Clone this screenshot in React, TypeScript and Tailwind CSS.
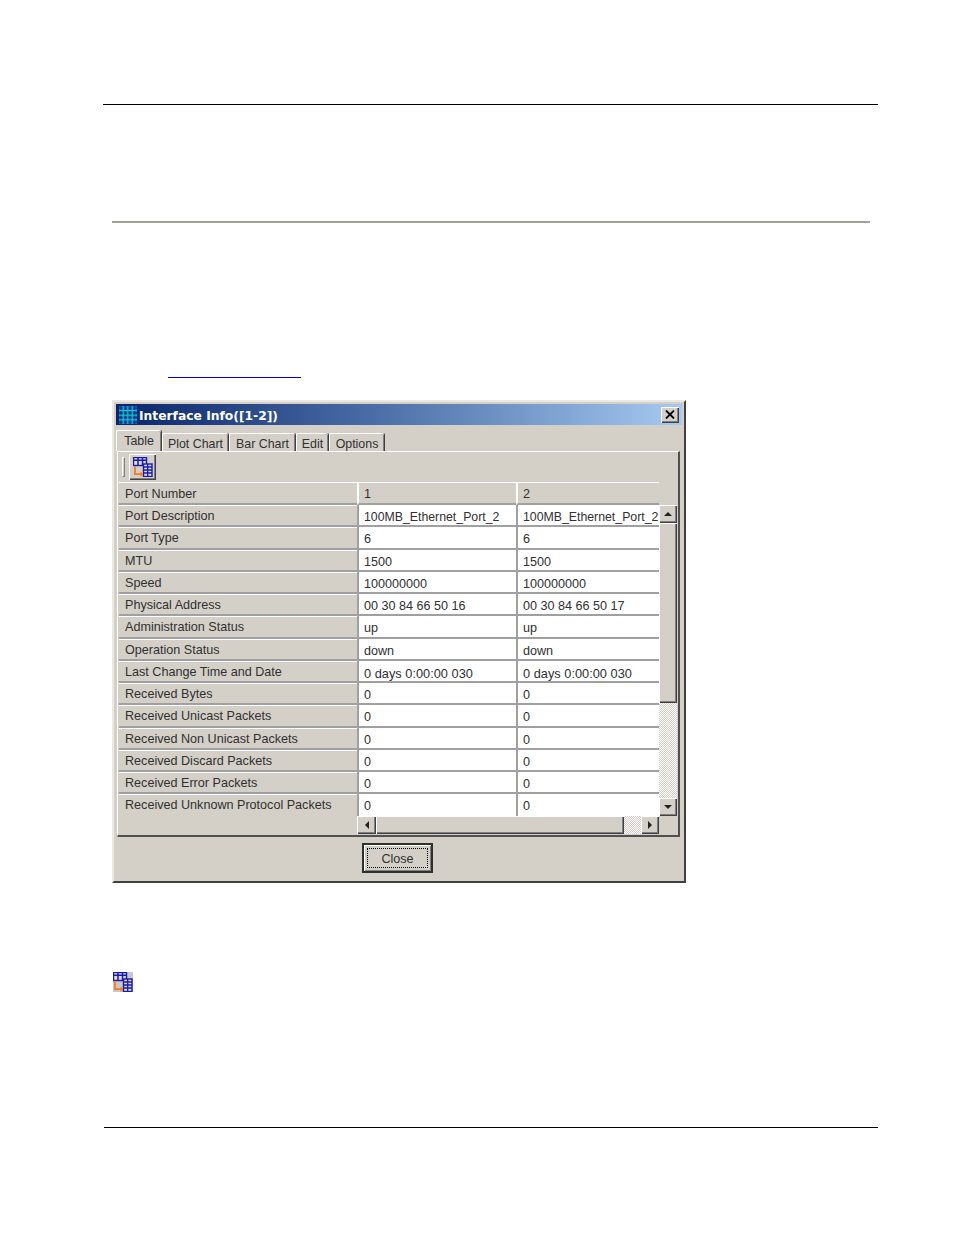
const rows: [string, string, string][] = [
  ["Port Description", "100MB_Ethernet_Port_2", "100MB_Ethernet_Port_2"],
  ["Port Type", "6", "6"],
  ["MTU", "1500", "1500"],
  ["Speed", "100000000", "100000000"],
  ["Physical Address", "00 30 84 66 50 16", "00 30 84 66 50 17"],
  ["Administration Status", "up", "up"],
  ["Operation Status", "down", "down"],
  ["Last Change Time and Date", "0 days 0:00:00 030", "0 days 0:00:00 030"],
  ["Received Bytes", "0", "0"],
  ["Received Unicast Packets", "0", "0"],
  ["Received Non Unicast Packets", "0", "0"],
  ["Received Discard Packets", "0", "0"],
  ["Received Error Packets", "0", "0"],
  ["Received Unknown Protocol Packets", "0", "0"],
];

const raised = "bg-[#d4d0c8] shadow-[inset_1px_1px_0_#ffffff,inset_-1px_-1px_0_#404040,inset_-2px_-2px_0_#808080]";
const dither = "bg-[repeating-conic-gradient(#d4d0c8_0_25%,#ffffff_0_50%)] bg-[length:2px_2px]";

function TableIcon({ size, backed }: { size: number; backed?: boolean }) {
  return (
    <svg width={size} height={size} viewBox="0 0 20 20">
      {backed && <rect x="0" y="0" width="20" height="20" fill="#c8c8c8" />}
      <rect x="0.5" y="0.5" width="13" height="8" fill="#dcdcf4" stroke="#1a1aa8" strokeWidth="1.4" />
      <path d="M0.5 3.2h13M5 0.5v8M9.5 0.5v8" stroke="#1a1aa8" strokeWidth="1.5" fill="none" />
      <rect x="10.5" y="7" width="8.5" height="12.5" fill="#dcdcf4" stroke="#1a1aa8" strokeWidth="1.4" />
      <path d="M10.5 10h8.5M10.5 13h8.5M10.5 16h8.5M14.7 7v12.5" stroke="#1a1aa8" strokeWidth="1.3" fill="none" />
      <path d="M2 9.5v7.7h6.5" stroke="#f47a20" strokeWidth="1.8" fill="none" />
      <path d="M7.5 14.5l2.6 2.7-2.6 2.7z" fill="#f47a20" />
    </svg>
  );
}

function GridIcon() {
  return (
    <svg width="20" height="20" viewBox="0 0 20 20">
      <rect x="1" y="1" width="18" height="18" fill="#1060e8" />
      <path d="M1 3h18M1 8h18M1 12.5h18M1 17h18M3 1v18M7.5 1v18M12 1v18M16.5 1v18" stroke="#063a70" strokeWidth="1.2" fill="none" />
      <path d="M1 5.5h18M1 10.2h18M1 14.8h18M5.2 1v18M9.8 1v18M14.2 1v18" stroke="#18c8b0" strokeWidth="1" fill="none" />
    </svg>
  );
}

function Arrow({ d }: { d: "up" | "down" | "left" | "right" }) {
  const points = {
    up: "4,0 0,4 8,4",
    down: "0,0 8,0 4,4",
    left: "4,0 4,8 0,4",
    right: "0,0 4,4 0,8",
  }[d];
  const horizontal = d === "left" || d === "right";
  return (
    <svg width={horizontal ? 4 : 8} height={horizontal ? 8 : 4} viewBox={horizontal ? "0 0 4 8" : "0 0 8 4"}>
      <polygon points={points} fill="#222222" />
    </svg>
  );
}

function ScrollButton({ d, className }: { d: "up" | "down" | "left" | "right"; className: string }) {
  return <div className={`${raised} ${className} flex shrink-0 items-center justify-center`}><Arrow d={d} /></div>;
}

function Tab({ label, width, active }: { label: string; width: string; active?: boolean }) {
  return (
    <div
      className={`${width} ${
        active
          ? "flex h-[21px] items-center justify-center rounded-t-[2px] border-l border-t border-white shadow-[inset_-1px_0_0_#808080,1px_0_0_#404040]"
          : "mt-[3px] flex h-[18px] items-center justify-center rounded-t-[2px] border-l border-t border-white pt-[3px] shadow-[inset_-1px_0_0_#808080,1px_0_0_#404040]"
      }`}
    >
      {label}
    </div>
  );
}

export default function App() {
  return (
    <div className="flex h-[1235px] w-[954px] flex-col bg-white font-['Liberation_Sans',Arial,sans-serif] text-[12.6px] text-[#303030]">
      <div className="ml-[103px] mt-[104px] h-px w-[775px] bg-black" />
      <div className="ml-[112px] mt-[116px] h-[2px] w-[758px] bg-[#a3a197]" />
      <div className="ml-[168px] mt-[154px] h-px w-[133px] bg-[#0000d8]" />

      <div className="ml-[112px] mt-[22px] flex h-[483px] w-[574px] flex-col border-b-2 border-l-2 border-r-2 border-t-2 border-b-[#404040] border-l-[#ece9e2] border-r-[#404040] border-t-[#ece9e2] bg-[#d4d0c8] p-[2px]">
        <div className="flex h-[21px] shrink-0 items-center bg-gradient-to-r from-[#0a246a] to-[#a6caf0] pl-[2px] pr-[3px]">
          <GridIcon />
          <span className="ml-[1px] pt-[3px] font-['DejaVu_Sans',sans-serif] text-[12.3px] font-bold text-white">Interface Info([1-2])</span>
          <div className={`${raised} ml-auto flex h-[16px] w-[18px] items-center justify-center`}>
            <svg width="10" height="9" viewBox="0 0 10 9"><path d="M1 0.5l8 8M9 0.5l-8 8" stroke="#000000" strokeWidth="1.8" /></svg>
          </div>
        </div>

        <div className="mt-[5px] flex h-[21px] shrink-0 gap-[1px] text-[12.4px]">
          <Tab label="Table" width="w-[45px]" active />
          <Tab label="Plot Chart" width="w-[66px]" />
          <Tab label="Bar Chart" width="w-[66px]" />
          <Tab label="Edit" width="w-[32px]" />
          <Tab label="Options" width="w-[55px]" />
        </div>

        <div className="ml-[1px] mr-[2px] flex h-[386px] shrink-0 flex-col border-b-2 border-l border-r-2 border-t border-b-[#505050] border-l-white border-r-[#505050] border-t-white">
          <div className="ml-[4px] mt-[2px] flex h-[25px] shrink-0 items-center">
            <div className="mr-[4px] h-[20px] w-[3px] border border-b-[#808080] border-l-white border-r-[#808080] border-t-white" />
            <div className={`${raised} flex h-[26px] w-[27px] shrink-0 items-center justify-center`}>
              <TableIcon size={20} />
            </div>
          </div>

          <div className="ml-[1px] mt-[3px] flex flex-col">
            <div className="flex h-[23px]">
              <div className="flex w-[238px] items-center border-b-2 border-t border-b-[#a0a0a0] border-t-white pl-[6px] pt-[2px]">Port Number</div>
              <div className="flex w-[159px] items-center border-b-2 border-l-2 border-t border-b-[#a0a0a0] border-l-white border-t-white pl-[5px] pt-[2px]">1</div>
              <div className="flex w-[143px] items-center border-b-2 border-l-2 border-t border-b-[#a0a0a0] border-l-white border-t-white pl-[5px] pt-[2px]">2</div>
            </div>

            <div className="flex">
              <div className="flex h-[311px] w-[540px] flex-col">
                {rows.map(([label, a, b], i) => (
                  <div key={label} className="flex h-[22.25px] shrink-0">
                    <div className={`flex w-[238px] items-center border-t border-t-white pl-[6px] pt-[2px] ${i === 13 ? "pb-[2px]" : "border-b-2 border-b-[#a0a0a0]"}`}>{label}</div>
                    <div className={`flex w-[159px] items-center border-l-2 border-l-[#a0a0a0] bg-white pl-[5px] pt-[5px] whitespace-nowrap ${i === 0 ? "text-[12.3px]" : i === 7 ? "text-[12.8px]" : ""} ${i === 13 ? "pb-[2px]" : "border-b-2 border-b-[#a0a0a0]"}`}>{a}</div>
                    <div className={`flex w-[143px] items-center border-l-2 border-l-[#a0a0a0] bg-white pl-[5px] pt-[5px] whitespace-nowrap ${i === 0 ? "text-[12.3px]" : i === 7 ? "text-[12.8px]" : ""} ${i === 13 ? "pb-[2px]" : "border-b-2 border-b-[#a0a0a0]"}`}>{b}</div>
                  </div>
                ))}
              </div>
              <div className="flex h-[311px] w-[18px] flex-col">
                <ScrollButton d="up" className="h-[18px] w-[18px]" />
                <div className={`${raised} h-[180px] w-[18px] shrink-0`} />
                <div className={`${dither} w-[18px] flex-1`} />
                <ScrollButton d="down" className="h-[18px] w-[18px]" />
              </div>
            </div>

            <div className="ml-[238px] flex h-[18px] w-[302px]">
              <ScrollButton d="left" className="h-[18px] w-[19px]" />
              <div className={`${raised} h-[18px] w-[248px] shrink-0`} />
              <div className={`${dither} h-[18px] flex-1`} />
              <ScrollButton d="right" className="h-[18px] w-[18px]" />
            </div>
          </div>
        </div>

        <div className="flex flex-1 items-start pl-[246px] pt-[6px]">
          <div className="flex h-[30px] w-[71px] items-center justify-center border-2 border-[#303030] p-[3px] shadow-[inset_1px_1px_0_#ffffff,inset_-1px_-1px_0_#808080]">
            <div className="flex h-full w-full items-center justify-center border border-dotted border-black pt-[2px]">Close</div>
          </div>
        </div>
      </div>

      <div className="ml-[113px] mt-[89px]">
        <TableIcon size={20} backed />
      </div>

      <div className="ml-[104px] mt-[135px] h-px w-[774px] bg-black" />
    </div>
  );
}
